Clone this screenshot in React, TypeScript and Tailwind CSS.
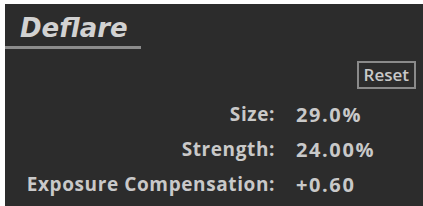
export default function App() {
  const rows = [
    { label: "Size:", value: "29.0%" },
    { label: "Strength:", value: "24.00%" },
    { label: "Exposure Compensation:", value: "+0.60" },
  ];

  return (
    <div className="h-[206px] w-[423px] bg-white pl-[5px] pt-[4px]">
      <div className="h-full w-full bg-[#2c2c2c] text-[#c9c9c9]">
        <div className="w-[136px] pt-[9px]">
          <h1
            className="pl-[15px] text-[26px] font-bold italic leading-[30px] text-[#d2d2d2]"
            style={{ fontFamily: '"DejaVu Sans", sans-serif' }}
          >
            Deflare
          </h1>
          <div className="mt-[3px] h-[3px] bg-[#8c8c8c]" />
        </div>

        <div className="flex justify-end pr-[7px] pt-[12px]">
          <button
            type="button"
            className="h-[28px] border-2 border-[#8a8a8a] px-[5px] text-[17px] font-semibold leading-[22px] text-[#c9c9c9]"
            style={{ fontFamily: '"Open Sans", sans-serif' }}
          >
            Reset
          </button>
        </div>

        <div
          className="mt-[8px] grid grid-cols-[270px_1fr] gap-x-[21px] text-[19px] leading-[35px]"
          style={{ fontFamily: '"Open Sans", sans-serif' }}
        >
          {rows.map((r) => (
            <div key={r.label} className="contents">
              <span className="text-right font-bold tracking-[0.6px]">{r.label}</span>
              <span className="text-[20px] font-bold tracking-[1.6px]">{r.value}</span>
            </div>
          ))}
        </div>
      </div>
    </div>
  );
}
